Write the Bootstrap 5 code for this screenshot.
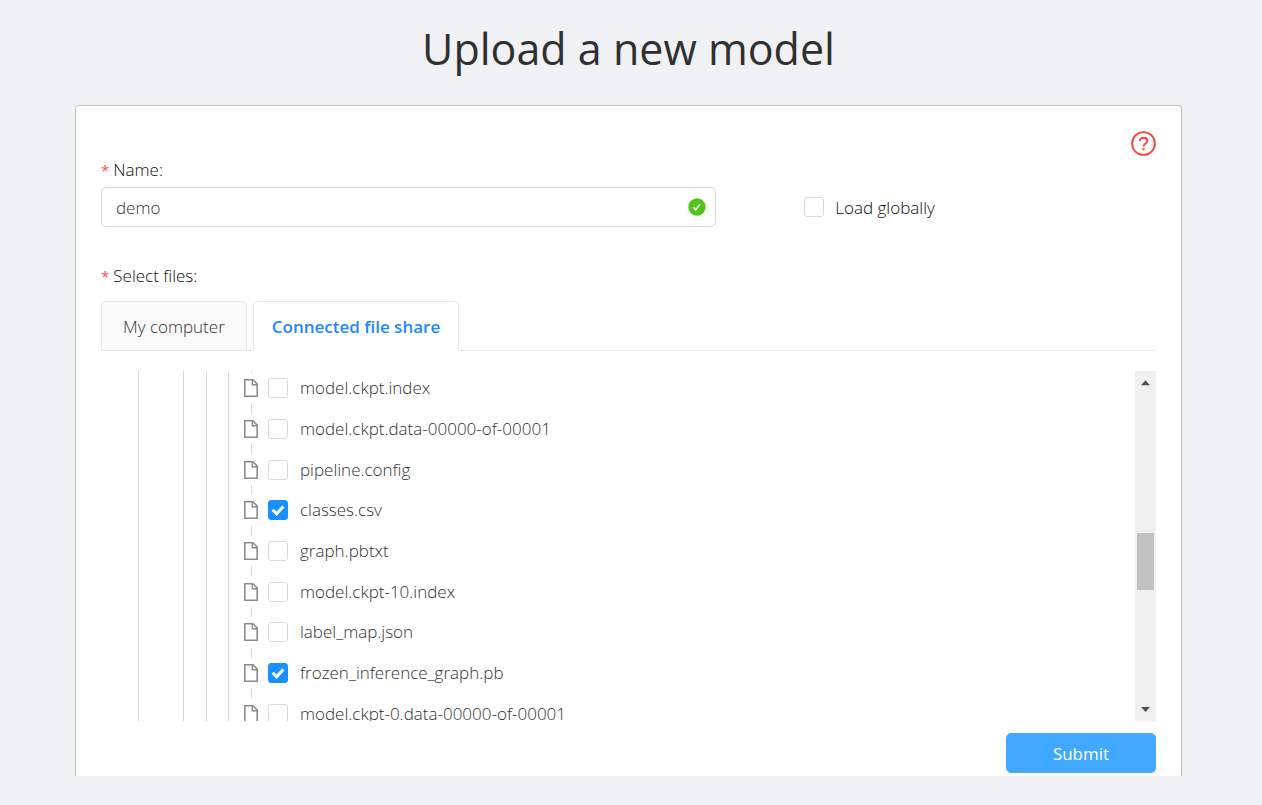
<!DOCTYPE html>
<html lang="en">
<head>
<meta charset="utf-8">
<meta name="viewport" content="width=device-width, initial-scale=1">
<title>Upload a new model</title>
<link href="https://cdn.jsdelivr.net/npm/bootstrap@5.3.0/dist/css/bootstrap.min.css" rel="stylesheet">
<style>
  body { background: #f0f1f5; color: #0c0c0c; font-family: "Open Sans", "Noto Sans", sans-serif; font-size: 17px; font-weight: 300; line-height: 26px; }
  .page { padding: 19px 80px 29px 75px; }
  .page-title { font-size: 43px; line-height: 60px; font-weight: 400; color: #303030; margin-bottom: 26px; }
  .panel { background: #fff; border: 1px solid #bfc0c4; border-bottom: 0; border-radius: 4px 4px 0 0; padding: 25px 25px 3px; }
  .help { width: 25px; height: 25px; }
  .help svg, .valid svg { display: block; }
  .req { padding-top: 1px; }
  .req::before { content: "*"; color: #ff4d4f; font-size: 15px; font-weight: 400; margin-right: 4px; }
  .name-input { height: 40px; padding: 1px 48px 0 14px; border: 1px solid #d9d9d9; border-radius: 5px; font-size: 17px; font-weight: 300; color: #303030; }
  .valid { right: 10px; top: 11px; }
  .form-check-input.tick { width: 20px; height: 20px; margin: 0; border: 1px solid #d9d9d9; border-radius: 3px; flex: none; }
  .form-check-input.tick:checked { background-color: #1890ff; border-color: #1890ff;
    background-size: 18px;
    background-image: url("data:image/svg+xml,%3Csvg xmlns='http://www.w3.org/2000/svg' viewBox='0 0 18 18'%3E%3Cpath d='M3.600 8.800l4 4L14.300 5.400' fill='none' stroke='%23fff' stroke-width='3'/%3E%3C/svg%3E"); }
  .global-label { padding-top: 1px; margin-left: 11px; }
  .files-label { margin-top: 35px; margin-bottom: 12px; }
  .share-tabs { --bs-nav-tabs-border-color: #e8e8e8; gap: 6px; }
  .share-tabs .nav-link { height: 50px; padding: 2px 21px 0; border: 1px solid #e8e8e8; border-radius: 5px 5px 0 0; background: #fafafa; color: #303030; font-weight: 300; }
  .share-tabs .nav-link.active { background: #fff; border-color: #e8e8e8 #e8e8e8 #fff; color: #1e88ff; font-weight: 600; padding: 2px 18px 0; }
  .viewport { height: 350px; margin-top: 20px; overflow: hidden; }
  .guide { border-left: 1px solid #d9d9d9; }
  .guide-a { margin-left: 37px; width: 45px; }
  .guide-b { width: 23px; }
  .guide-c { width: 22px; }
  .guide-d { width: 15px; }
  .files { display: grid; grid-auto-rows: 1fr; height: 366px; margin-top: -3px; color: #303030; }
  .files li { display: flex; align-items: center; }
  .files label { margin-left: 12px; }
  .leaf { display: grid; grid-template-rows: 5px 1fr 5px; justify-items: center; width: 16px; height: 100%; margin-right: 9px; flex: none; }
  .leaf::before, .leaf::after { content: ""; width: 1px; background: #d9d9d9; }
  .leaf svg { align-self: center; display: block; }
  .track { width: 21px; background: #f0f0f0; padding: 8px 2px; }
  .thumb { height: 57px; background: #c1c1c1; margin-top: 146px; }
  .submit { --bs-btn-bg: #40a9ff; --bs-btn-border-color: #40a9ff; --bs-btn-hover-bg: #1890ff; width: 150px; height: 40px; padding: 1px 0 0; font-size: 17px; border-radius: 5px; margin-top: 12px; }
</style>
</head>
<body>
<svg width="0" height="0" class="position-absolute" aria-hidden="true">
  <symbol id="file" viewBox="0 0 16 20">
    <path d="M1.800 1.800H10L14.200 6V18.200H1.800z" fill="#fff" stroke="#8c8c8c" stroke-width="1.600"/>
    <path d="M9.300 2V6.700H14" fill="none" stroke="#8c8c8c" stroke-width="1.400"/>
  </symbol>
</svg>
<main class="page">
  <h1 class="page-title text-center">Upload a new model</h1>
  <form class="panel">
    <div class="d-flex justify-content-end">
      <button type="button" class="btn p-0 border-0 help" aria-label="Help">
        <svg width="25" height="25" viewBox="0 0 25 25" fill="none" stroke="#ff4338" stroke-width="1.900"><circle cx="12.500" cy="12.500" r="11.400"/><path d="M8.700 10.200C8.700 7.900 10.200 6.800 12.500 6.800S16.300 8 16.300 10c0 2.600-3.700 2.500-3.700 5.600"/><path d="M12.500 17.200v2.100" stroke-width="2.200"/></svg>
      </button>
    </div>
    <label for="name" class="d-block req mb-1">Name:</label>
    <div class="row g-0 align-items-center">
      <div class="col-7 position-relative">
        <input id="name" type="text" class="form-control name-input" value="demo">
        <span class="position-absolute valid"><svg width="18" height="18" viewBox="0 0 18 18"><circle cx="9" cy="9" r="8.700" fill="#52c41a"/><path d="M5.500 9.200l2.300 2.700 4.100-5.600" fill="none" stroke="#fff" stroke-width="1.500"/></svg></span>
      </div>
      <div class="col-4 offset-1 d-flex align-items-center">
        <input id="global" type="checkbox" class="form-check-input tick">
        <label for="global" class="global-label">Load globally</label>
      </div>
    </div>
    <div class="req files-label">Select files:</div>
    <ul class="nav nav-tabs share-tabs">
      <li class="nav-item"><button type="button" class="nav-link">My computer</button></li>
      <li class="nav-item"><button type="button" class="nav-link active">Connected file share</button></li>
    </ul>
    <div class="viewport d-flex">
      <div class="guide guide-a"></div><div class="guide guide-b"></div><div class="guide guide-c"></div><div class="guide guide-d"></div>
      <ul class="files list-unstyled flex-grow-1 mb-0">
        <li><span class="leaf"><svg width="16" height="20"><use href="#file"/></svg></span><input id="f1" type="checkbox" class="form-check-input tick"><label for="f1">model.ckpt.index</label></li>
        <li><span class="leaf"><svg width="16" height="20"><use href="#file"/></svg></span><input id="f2" type="checkbox" class="form-check-input tick"><label for="f2">model.ckpt.data-00000-of-00001</label></li>
        <li><span class="leaf"><svg width="16" height="20"><use href="#file"/></svg></span><input id="f3" type="checkbox" class="form-check-input tick"><label for="f3">pipeline.config</label></li>
        <li><span class="leaf"><svg width="16" height="20"><use href="#file"/></svg></span><input id="f4" type="checkbox" class="form-check-input tick" checked><label for="f4">classes.csv</label></li>
        <li><span class="leaf"><svg width="16" height="20"><use href="#file"/></svg></span><input id="f5" type="checkbox" class="form-check-input tick"><label for="f5">graph.pbtxt</label></li>
        <li><span class="leaf"><svg width="16" height="20"><use href="#file"/></svg></span><input id="f6" type="checkbox" class="form-check-input tick"><label for="f6">model.ckpt-10.index</label></li>
        <li><span class="leaf"><svg width="16" height="20"><use href="#file"/></svg></span><input id="f7" type="checkbox" class="form-check-input tick"><label for="f7">label_map.json</label></li>
        <li><span class="leaf"><svg width="16" height="20"><use href="#file"/></svg></span><input id="f8" type="checkbox" class="form-check-input tick" checked><label for="f8">frozen_inference_graph.pb</label></li>
        <li><span class="leaf"><svg width="16" height="20"><use href="#file"/></svg></span><input id="f9" type="checkbox" class="form-check-input tick"><label for="f9">model.ckpt-0.data-00000-of-00001</label></li>
      </ul>
      <div class="track d-flex flex-column" aria-hidden="true">
        <svg width="17" height="8" viewBox="0 0 17 8"><path d="M4 6.200l4.500-5 4.500 5z" fill="#505050"/></svg>
        <div class="thumb"></div>
        <svg class="mt-auto" width="17" height="8" viewBox="0 0 17 8"><path d="M4 2l4.500 5L13 2z" fill="#505050"/></svg>
      </div>
    </div>
    <div class="d-flex justify-content-end">
      <button type="submit" class="btn btn-primary submit">Submit</button>
    </div>
  </form>
</main>
<script src="https://cdn.jsdelivr.net/npm/bootstrap@5.3.0/dist/js/bootstrap.bundle.min.js"></script>
</body>
</html>
